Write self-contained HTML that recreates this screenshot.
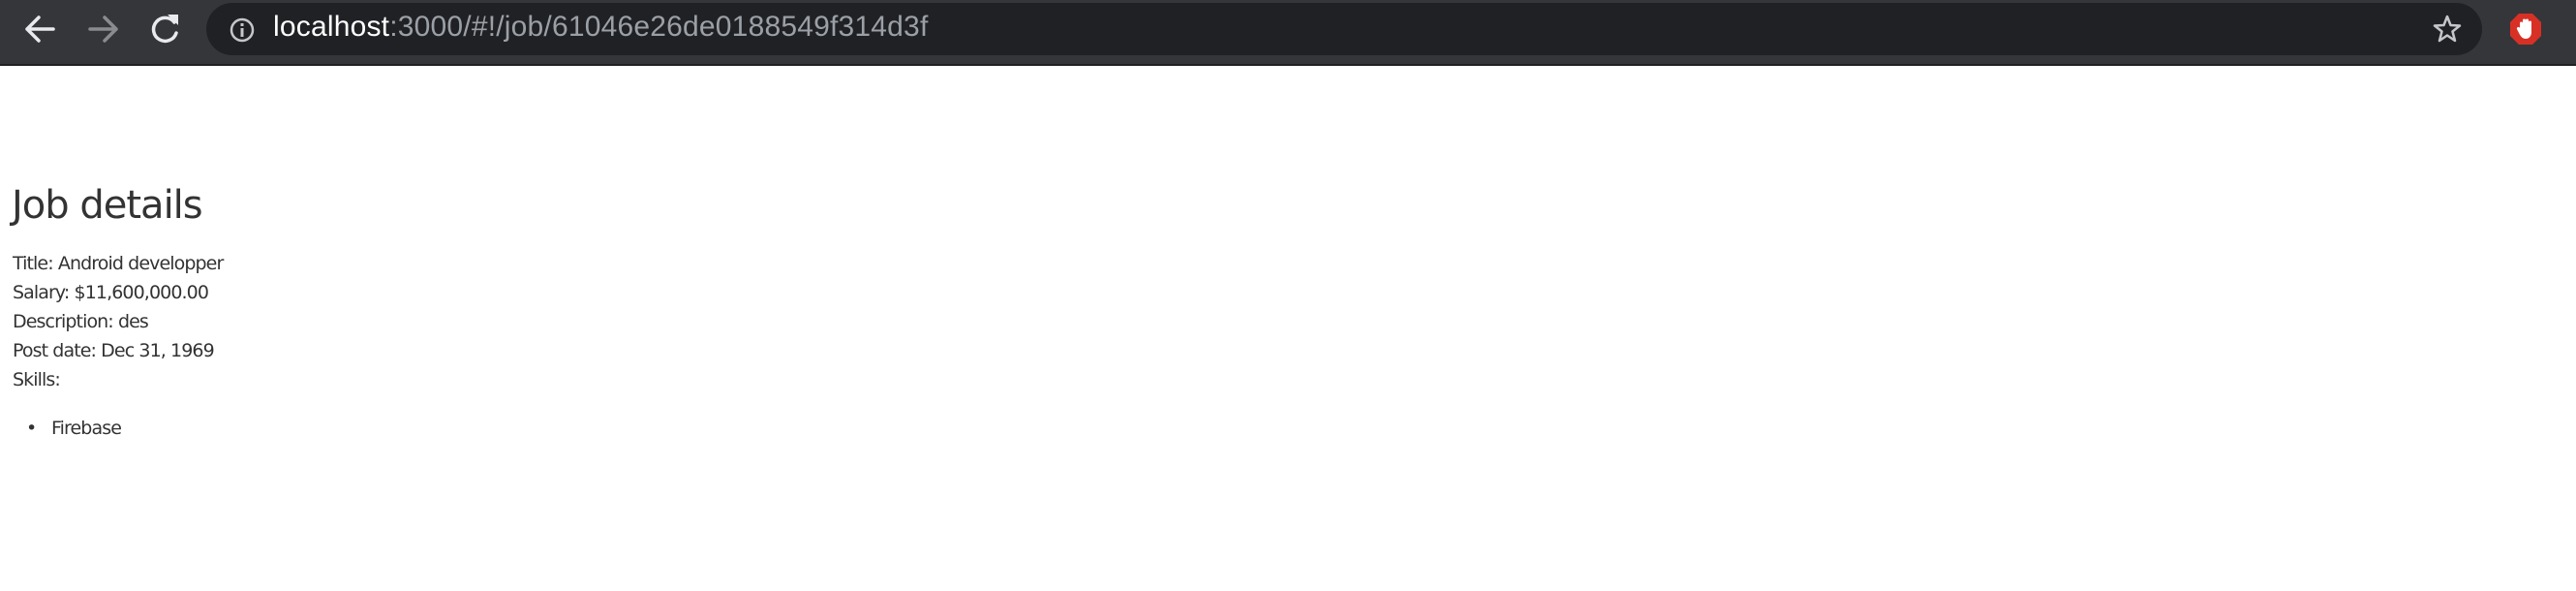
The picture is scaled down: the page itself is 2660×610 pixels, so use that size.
<!DOCTYPE html>
<html><head><style>
body{margin:0;width:2660px;height:610px;background:#fff;overflow:hidden;font-family:"Liberation Sans",sans-serif;}
.bar{position:absolute;left:0;top:0;width:2660px;height:66px;background:#35363a;border-bottom:2px solid #1f2023;}
.url{position:absolute;left:213px;top:3px;width:2350px;height:54px;border-radius:27px;background:#202124;}
.ut{position:absolute;left:282px;top:11px;font-size:30px;color:#9aa0a6;letter-spacing:0.2px;}
.ut b{font-weight:normal;color:#fff}
.c{position:absolute;left:13px;color:#333;}
h1{position:absolute;left:12px;top:189px;margin:0;font-weight:normal;font-size:40px;color:#333;font-family:"DejaVu Sans",sans-serif;letter-spacing:-1px}
.l{font-size:19px;font-family:"DejaVu Sans",sans-serif;letter-spacing:-0.9px}
</style></head><body>
<div class="bar">
<svg style="position:absolute;left:0;top:0" width="240" height="66">
<g fill="none" stroke-width="3.5" stroke-linecap="round" stroke-linejoin="round">
<path d="M55 30H28M40 18L28 30L40 42" stroke="#e8eaed"/>
<path d="M93 30H120M108 18L120 30L108 42" stroke="#8a8b8e"/>
<path d="M180 23A12 12 0 1 0 182 34" stroke="#e8eaed"/>
</g>
<path d="M173 15L184 15L184 26Z" fill="#e8eaed"/>
</svg>
<div class="url"></div>
<svg style="position:absolute;left:235px;top:16px" width="30" height="30"><circle cx="15" cy="15" r="11" fill="none" stroke="#c4c7c9" stroke-width="2.5"/><rect x="13.5" y="13" width="3" height="9" fill="#c4c7c9"/><rect x="13.5" y="8" width="3" height="3" fill="#c4c7c9"/></svg>
<div class="ut"><b>localhost</b>:3000/#!/job/61046e26de0188549f314d3f</div>
<svg style="position:absolute;left:2511px;top:14px" width="32" height="32"><path d="M16 3L19.5 12L29 12.5L21.5 18.5L24 28L16 22.5L8 28L10.5 18.5L3 12.5L12.5 12Z" fill="none" stroke="#c4c7c9" stroke-width="2.5" stroke-linejoin="round"/></svg>
<svg style="position:absolute;left:2591px;top:13px" width="34" height="34"><path d="M10 1H24L33 10V24L24 33H10L1 24V10Z" fill="#d93025"/><path d="M11 16V11a1.5 1.5 0 0 1 3 0V16V8a1.5 1.5 0 0 1 3 0V16V8a1.5 1.5 0 0 1 3 0V16V10a1.5 1.5 0 0 1 3 0V20C23 25 20 27 17 27C14 27 12 25 10 21L8 17a1.5 1.5 0 0 1 3-1Z" fill="#fff"/></svg>
</div>
<h1>Job details</h1>
<div class="c l" style="top:261px">Title: Android developper</div>
<div class="c l" style="top:291px">Salary: $11,600,000.00</div>
<div class="c l" style="top:321px">Description: des</div>
<div class="c l" style="top:351px">Post date: Dec 31, 1969</div>
<div class="c l" style="top:381px">Skills:</div>
<div class="c l" style="top:431px;left:27px">•</div>
<div class="c l" style="top:431px;left:53px">Firebase</div>
</body></html>
